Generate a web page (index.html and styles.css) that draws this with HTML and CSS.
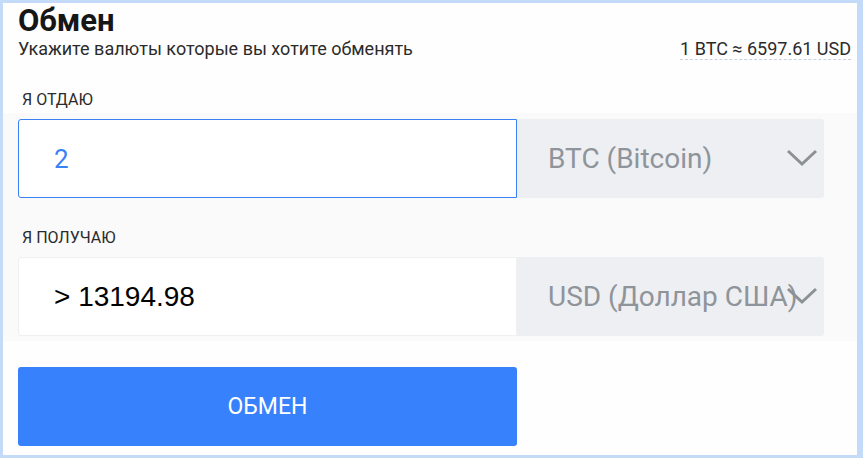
FILE: index.html
```html
<!DOCTYPE html>
<html lang="ru">
<head>
<meta charset="utf-8">
<link rel="stylesheet" href="styles.css">
</head>
<body>
<div class="panel">
  <div class="head">
    <h1 class="title">Обмен</h1>
    <div class="subrow">
      <div class="subtitle">Укажите валюты которые вы хотите обменять</div>
      <div class="rate">1 BTC ≈ 6597.61 USD</div>
    </div>
    <div class="label first">Я ОТДАЮ</div>
  </div>
  <div class="body">
    <div class="row">
      <div class="field active"><span class="val give">2</span></div>
      <div class="select">
        <span class="cur">BTC (Bitcoin)</span>
        <svg class="chev" width="32" height="18" viewBox="0 0 32 18"><path d="M2 2 L16 15 L30 2" fill="none" stroke="#8c9196" stroke-width="3"/></svg>
      </div>
    </div>
    <div class="label second">Я ПОЛУЧАЮ</div>
    <div class="row">
      <div class="field"><span class="val get">&gt; 13194.98</span></div>
      <div class="select">
        <span class="cur">USD (Доллар США)</span>
        <svg class="chev" width="32" height="18" viewBox="0 0 32 18"><path d="M2 2 L16 15 L30 2" fill="none" stroke="#8c9196" stroke-width="3"/></svg>
      </div>
    </div>
  </div>
  <div class="foot">
    <button class="btn">ОБМЕН</button>
  </div>
</div>
</body>
</html>
```
FILE: styles.css
```css
html, body {
  margin: 0;
  padding: 0;
}
body {
  background: #c3daf9;
  width: 863px;
  height: 458px;
  overflow: hidden;
  font-family: Roboto, "Noto Sans", sans-serif;
}
.panel {
  margin: 3px 6px 0 3px;
  height: 452px;
  background: #fefefe;
}
.head {
  height: 110px;
  padding: 0 6px 0 15px;
  box-sizing: border-box;
}
.title {
  margin: 0;
  font-size: 31px;
  line-height: 36px;
  font-weight: 700;
  color: #161616;
}
.subrow {
  display: flex;
  justify-content: space-between;
  align-items: flex-start;
}
.subtitle {
  font-size: 18px;
  line-height: 20px;
  color: #2b2b2b;
}
.rate {
  font-size: 18px;
  line-height: 20px;
  color: #2b2b2b;
  border-bottom: 1px dashed #c9d2dc;
}
.label {
  font-size: 16px;
  line-height: 18px;
  color: #2b2b2b;
  padding-left: 4px;
}
.label.first {
  margin-top: 31px;
}
.label.second {
  margin: 31px 0 10px;
}
.body {
  background: #fafafa;
  padding: 6px 33px 5px 15px;
}
.row {
  display: flex;
  height: 79px;
}
.field {
  width: 499px;
  box-sizing: border-box;
  background: #fff;
  border: 1px solid #f0f0f0;
  border-radius: 3px 0 0 3px;
  display: flex;
  align-items: center;
  padding-left: 35px;
}
.field.active {
  border-color: #3a81f5;
}
.val.give {
  font-size: 26px;
  color: #3a80f6;
}
.val.get {
  font-family: "Liberation Sans", Arial, sans-serif;
  font-size: 28px;
  color: #000;
}
.select {
  position: relative;
  flex: 1;
  background: #edeff2;
  border-radius: 0 3px 3px 0;
  display: flex;
  align-items: center;
  padding-left: 31px;
}
.cur {
  font-size: 28px;
  color: #8f949a;
}
.chev {
  position: absolute;
  right: 6px;
  top: 30px;
}
.foot {
  padding: 26px 0 0 15px;
}
.btn {
  display: block;
  width: 499px;
  height: 79px;
  border: 0;
  border-radius: 3px;
  background: #3781fc;
  color: #fff;
  font-family: Roboto, "Noto Sans", sans-serif;
  font-size: 23px;
  padding: 0;
}
```
